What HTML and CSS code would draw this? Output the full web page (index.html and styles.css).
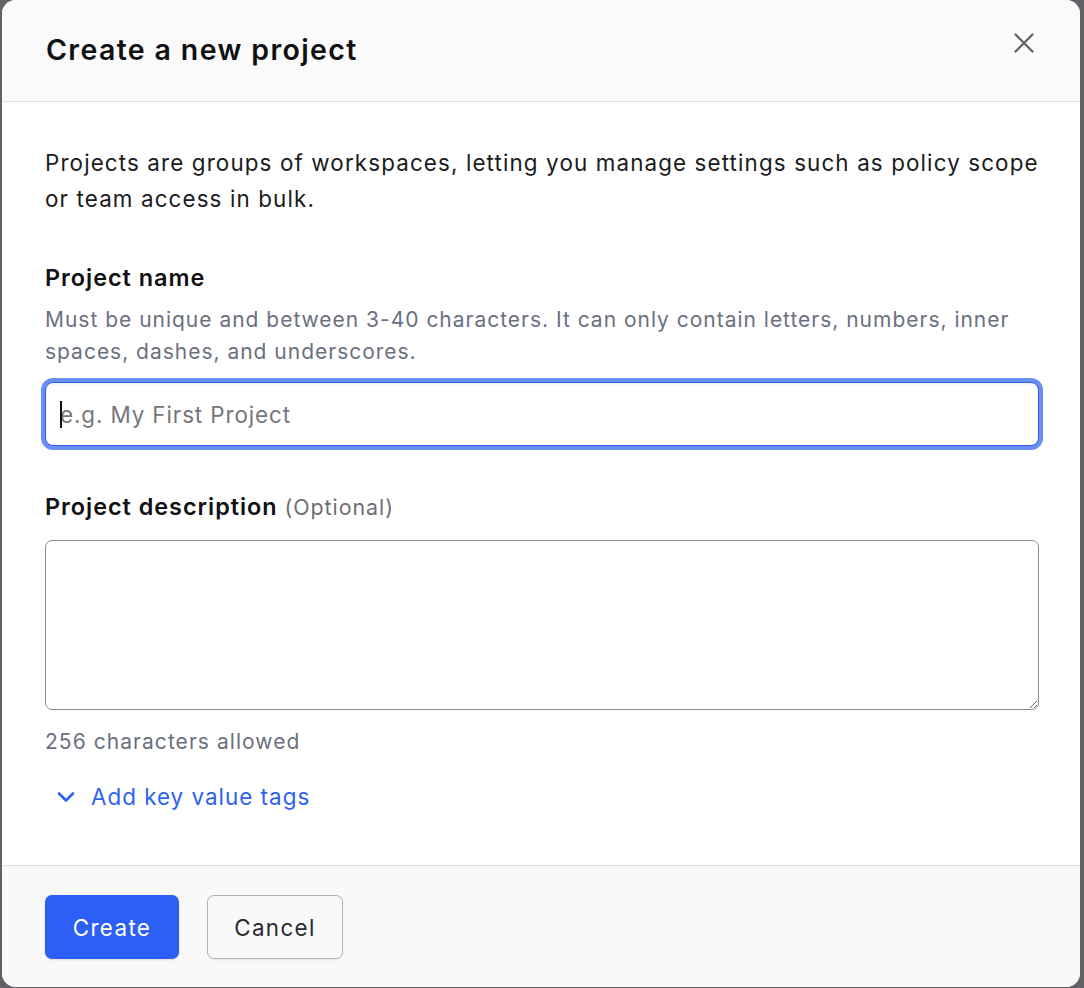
FILE: index.html
```html
<!DOCTYPE html>
<html lang="en">
<head>
<meta charset="utf-8">
<title>Create a new project</title>
<link rel="stylesheet" href="styles.css">
</head>
<body>
<div class="modal">
  <header class="modal-header">
    <h1 class="modal-title">Create a new project</h1>
    <button class="close-btn" aria-label="Close">
      <svg width="20" height="20" viewBox="0 0 20 20" fill="none" stroke="#5c6068" stroke-width="2.2" stroke-linecap="round"><path d="M1.5 1.5 L18.5 18.5 M18.5 1.5 L1.5 18.5"/></svg>
    </button>
  </header>
  <main class="modal-body">
    <p class="intro">Projects are groups of workspaces, letting you manage settings such as policy scope or team access in bulk.</p>

    <div class="field">
      <label class="label" for="pname">Project name</label>
      <p class="help">Must be unique and between 3-40 characters. It can only contain letters, numbers, inner spaces, dashes, and underscores.</p>
      <div class="input-wrap">
        <span class="caret"></span>
        <input id="pname" class="input focused" type="text" placeholder="e.g. My First Project">
      </div>
    </div>

    <div class="field field-desc">
      <label class="label" for="pdesc">Project description <span class="optional">(Optional)</span></label>
      <textarea id="pdesc" class="textarea"></textarea>
      <p class="help count">256 characters allowed</p>
    </div>

    <button class="link-btn">
      <svg width="18" height="12" viewBox="0 0 18 12" fill="none" stroke="#2e62f0" stroke-width="2.6" stroke-linecap="round" stroke-linejoin="round"><path d="M2 2.5 L9 9.5 L16 2.5"/></svg>
      <span>Add key value tags</span>
    </button>
  </main>
  <footer class="modal-footer">
    <button class="btn btn-primary">Create</button>
    <button class="btn btn-secondary">Cancel</button>
  </footer>
</div>
</body>
</html>
```

FILE: styles.css
```css
* { box-sizing: border-box; }

html, body {
  margin: 0;
  padding: 0;
}

body {
  background: #626266;
  font-family: Inter, "Noto Sans", "Liberation Sans", sans-serif;
  color: #1b1b1d;
  letter-spacing: 0.048em;
  padding: 0 4px 1px 2px;
}

.modal {
  width: 1078px;
  background: #ffffff;
  border-radius: 14px;
  overflow: hidden;
  display: flex;
  flex-direction: column;
}

.modal-header {
  height: 102px;
  background: #fafafa;
  border-bottom: 1px solid #dedede;
  display: flex;
  align-items: flex-start;
  justify-content: space-between;
  padding: 0 46px 0 44px;
}

.modal-title {
  margin: 31px 0 0 0;
  font-size: 28.5px;
  line-height: 38px;
  font-weight: 600;
  color: #111113;
  letter-spacing: 0.048em;
}

.close-btn {
  margin-top: 33px;
  background: none;
  border: none;
  padding: 0;
  width: 20px;
  height: 20px;
  display: flex;
  cursor: pointer;
}

.modal-body {
  height: 763px;
  padding: 43px 41px 0 43px;
  display: flex;
  flex-direction: column;
}

.intro {
  margin: 0 -20px 0 0;
  font-size: 22.4px;
  line-height: 36px;
  color: #1b1b1d;
  letter-spacing: 0.05em;
}

.field {
  display: flex;
  flex-direction: column;
  margin-top: 43px;
}

.label {
  font-size: 23.4px;
  line-height: 36px;
  font-weight: 600;
  color: #111113;
  letter-spacing: 0.042em;
}

.optional {
  font-weight: 400;
  color: #6f6f73;
  font-size: 21.4px;
  letter-spacing: 0.045em;
}

.help {
  margin: 8px 0 0 0;
  font-size: 21px;
  line-height: 32px;
  color: #6b7080;
  letter-spacing: 0.047em;
}

.input-wrap {
  position: relative;
  margin-top: 14px;
}

.input {
  width: 100%;
  height: 64px;
  border: 1px solid #9a9aa0;
  border-radius: 8px;
  padding: 0 14px;
  font-family: inherit;
  font-size: 22.4px;
  letter-spacing: 0.04em;
  color: #1b1b1d;
  background: #fff;
  outline: none;
}

.input.focused {
  border-color: #2f5de8;
  box-shadow: 0 0 0 4px #6a8ff3, inset 0 2px 3px rgba(0,0,0,0.06);
}

.input::placeholder {
  color: #76767a;
}

.caret {
  position: absolute;
  left: 15px;
  top: 19px;
  width: 2px;
  height: 27px;
  background: #111;
  z-index: 1;
}

.field-desc {
  margin-top: 43px;
}

.textarea {
  margin-top: 15px;
  width: 100%;
  height: 170px;
  border: 1px solid #8e8e96;
  border-radius: 7px;
  resize: vertical;
  font-family: inherit;
  font-size: 22.4px;
  padding: 12px 14px;
  background: #fff;
  outline: none;
}

.count {
  margin-top: 16px;
  letter-spacing: 0.05em;
}

.link-btn {
  margin-top: 21px;
  align-self: flex-start;
  background: none;
  border: none;
  padding: 0 0 0 12px;
  display: flex;
  align-items: center;
  gap: 16px;
  font-family: inherit;
  font-size: 22.4px;
  letter-spacing: 0.045em;
  line-height: 36px;
  color: #2e62f0;
  cursor: pointer;
}

.modal-footer {
  height: 122px;
  background: #f9f9f9;
  border-top: 1px solid #dedede;
  display: flex;
  align-items: flex-start;
  gap: 28px;
  padding: 29px 0 0 43px;
}

.btn {
  height: 64px;
  border-radius: 7px;
  font-family: inherit;
  font-size: 22.4px;
  letter-spacing: 0.06em;
  cursor: pointer;
}

.btn-primary {
  width: 134px;
  background: #2c5ff5;
  border: none;
  color: #ffffff;
  box-shadow: 0 1px 2px rgba(0,0,0,0.12);
}

.btn-secondary {
  width: 136px;
  background: #f9f9f9;
  border: 1px solid #b3b3b3;
  color: #2a2a2c;
  box-shadow: 0 1px 2px rgba(0,0,0,0.08);
}
```
